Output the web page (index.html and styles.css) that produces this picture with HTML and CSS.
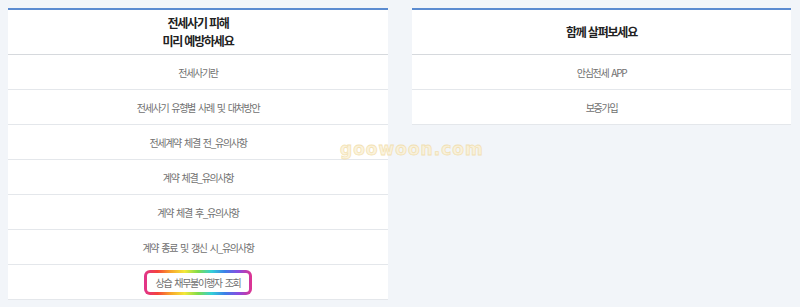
FILE: index.html
```html
<!DOCTYPE html>
<html lang="ko">
<head>
    <meta charset="UTF-8">
    <meta name="viewport" content="width=device-width, initial-scale=1.0">
    <title>전세사기 예방</title>
    <link rel="stylesheet" href="styles.css">
</head>
<body>

    <div class="container">
        <div class="card">
            <h2 class="card-title">전세사기 피해<br>미리 예방하세요</h2>
            <ul class="link-list">
                <li>전세사기란</li>
                <li>전세사기 유형별 사례 및 대처방안</li>
                <li>전세계약 체결 전_유의사항</li>
                <li>계약 체결_유의사항</li>
                <li>계약 체결 후_유의사항</li>
                <li>계약 종료 및 갱신 시_유의사항</li>
                <li><span class="rainbow-box">상습 채무불이행자 조회</span></li>
            </ul>
        </div>

        <div class="card">
            <h2 class="card-title">함께 살펴보세요</h2>
            <ul class="link-list">
                <li>안심전세 APP</li>
                <li>보증가입</li>
            </ul>
        </div>
    </div>

    <div class="watermark">goowoon.com</div>

</body>
</html>
```

FILE: styles.css
```css
body {
    font-family: "Noto Sans CJK KR", "Noto Sans", sans-serif;
    margin: 0;
    padding: 0;
    background-color: #f2f5f9;
    color: #333;
    overflow: hidden;
}

.container {
    display: grid;
    grid-template-columns: 380px 379px;
    column-gap: 24px;
    align-items: start;
    padding: 8px 0 0 8px;
}

.card {
    background-color: #fff;
    border-top: 2px solid #5b8bd0;
}

.card-title {
    height: 44px;
    margin: 0;
    display: flex;
    align-items: center;
    justify-content: center;
    text-align: center;
    font-size: 12px;
    line-height: 18px;
    font-weight: bold;
    letter-spacing: -1.2px;
    color: #222;
    border-bottom: 1px solid #d6d9dd;
}

.link-list {
    list-style: none;
    padding: 0;
    margin: 0;
}

.link-list li {
    height: 34px;
    display: flex;
    align-items: center;
    justify-content: center;
    font-size: 10px;
    color: #707070;
    border-bottom: 1px solid #e4e7eb;
    letter-spacing: -1.3px;
    word-spacing: 1.5px;
}

/* 무지개 테두리 강조 */
.rainbow-box {
    padding: 2px 8px;
    border: 3px solid transparent;
    border-radius: 6px;
    background:
        linear-gradient(#fff, #fff) padding-box,
        linear-gradient(90deg, #e0338f, #f5433a, #f8a62b, #f3e83a, #7fdc4a, #33d0d8, #3d7fe8, #8a4ce0, #e0338f) border-box;
}

.watermark {
    position: absolute;
    left: 340px;
    top: 139px;
    font-family: "DejaVu Sans", sans-serif;
    font-size: 17px;
    font-weight: bold;
    letter-spacing: 1px;
    color: #fbf1d6;
    -webkit-text-stroke: 0.8px #f1dca4;
    opacity: 0.8;
}
```
